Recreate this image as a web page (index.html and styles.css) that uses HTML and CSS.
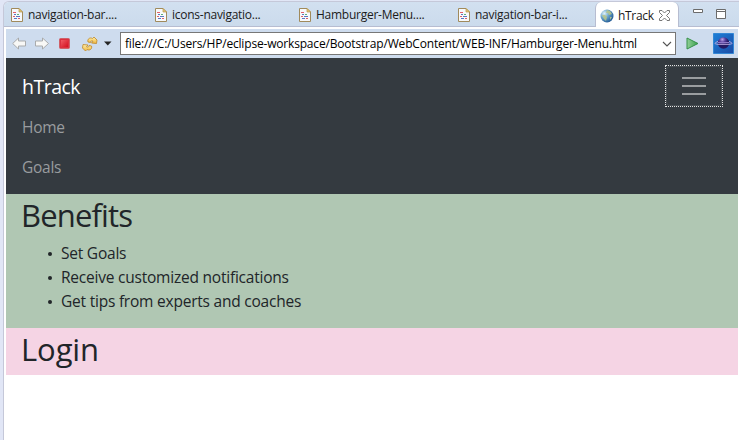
FILE: index.html
```html
<!DOCTYPE html>
<html lang="en">
<head>
<meta charset="utf-8">
<title>hTrack</title>
<link rel="stylesheet" href="styles.css">
</head>
<body>
<svg class="defs" width="0" height="0">
  <symbol id="file" viewBox="0 0 12 14">
    <path d="M.5 .5H8L11.500 4V13.500H.5Z" fill="#f7f9fb" stroke="#a08a5c"/>
    <path d="M8 .5V4H11.500Z" fill="#e3c877" stroke="#b8954a" stroke-width=".7"/>
    <path d="M2 4.500H5M2 8.500H4M7 10.500H9" stroke="#e0606c"/>
    <path d="M3 6.500H5M5 8.500H9M3 10.500H6" stroke="#5a78c0"/>
    <path d="M6 6.500H8" stroke="#5fb27b"/>
  </symbol>
</svg>
<div class="window">
  <header class="tabs">
    <div class="tab t1"><svg class="file"><use href="#file"/></svg><span class="label">navigation-bar....</span></div>
    <div class="tab t2"><svg class="file"><use href="#file"/></svg><span class="label">icons-navigatio...</span></div>
    <div class="tab t3"><svg class="file"><use href="#file"/></svg><span class="label">Hamburger-Menu....</span></div>
    <div class="tab t4"><svg class="file"><use href="#file"/></svg><span class="label">navigation-bar-i...</span></div>
    <div class="tab active">
      <svg class="globe" viewBox="0 0 14 14"><defs><radialGradient id="sea" cx=".3" cy=".3" r=".8"><stop offset="0" stop-color="#e0f2fa"/><stop offset=".45" stop-color="#6aa4cb"/><stop offset="1" stop-color="#1d5591"/></radialGradient></defs><circle cx="7" cy="7" r="6.500" fill="url(#sea)"/><path d="M7 1L10 2 12 5 9 6 8 4 6 4ZM2 6L5 6 7 8 6 12 4 10ZM10 8L12 8 10 11Z" fill="#b9c587" fill-opacity=".85"/></svg>
      <span class="label current">hTrack</span>
      <svg class="close" viewBox="0 0 11 11"><path d="M.5 .5H3L5.500 3 8 .5H10.500V2.500L7.500 5.500 10.500 8.500V10.500H8L5.500 8 3 10.500H.5V8.500L3.500 5.500 .5 2.500Z" fill="#fff" stroke="#767676"/></svg>
    </div>
    <svg class="controls" viewBox="0 0 34 12"><path d="M.5 1.500H9.500V4.500H.5Z" fill="#fff" stroke="#6b6b6b"/><path d="M23.500 1.500H32.500V10.500H23.500ZM23 3.500H33" fill="#fff" stroke="#6b6b6b"/></svg>
  </header>
  <div class="toolbar">
    <svg class="actions" viewBox="0 0 106 20">
      <defs>
        <linearGradient id="gold" x2="0" y2="1"><stop offset="0" stop-color="#fff0ab"/><stop offset="1" stop-color="#efb63f"/></linearGradient>
        <linearGradient id="red" x2="1" y2="1"><stop offset="0" stop-color="#f05a64"/><stop offset="1" stop-color="#d3101f"/></linearGradient>
      </defs>
      <path d="M.7 9.500L6.500 4V7H13.500V12H6.500V15Z" fill="#f8f8f6" stroke="#a9abac"/>
      <path d="M36.500 9.500L30.500 4V7H23.500V12H30.500V15Z" fill="#f8f8f6" stroke="#a9abac"/>
      <rect x="47.500" y="4.500" width="10" height="10" rx="1" fill="#dc3040" stroke="#cf6068"/><path d="M49 6H56V13H49Z" fill="url(#red)"/>
      <path d="M76 8C75 5 78 3 80.500 4.500L82 3 85 6 84.500 9.500 79.500 9 81 7.200C79.500 6.500 78.500 7 78.500 8.500Z" fill="url(#gold)" stroke="#bd8829" stroke-width=".8"/>
      <path d="M79.500 12C80.500 15 77.500 17 75 15.500L73.500 17 70.500 14 71 10.500 76 11 74.500 12.800C76 13.500 77 13 77 11.500Z" fill="url(#gold)" stroke="#bd8829" stroke-width=".8"/>
      <path d="M92 7.500H99.500L95.750 11.500Z" fill="#242424"/>
    </svg>
    <div class="address"><span>file:///C:/Users/HP/eclipse-workspace/Bootstrap/WebContent/WEB-INF/Hamburger-Menu.html</span><svg class="chevron" viewBox="0 0 10 6"><path d="M1 1L5 5 9 1" fill="none" stroke="#555" stroke-width="1.100"/></svg></div>
    <svg class="go" viewBox="0 0 13 13"><defs><linearGradient id="green"><stop offset="0" stop-color="#93cf98"/><stop offset="1" stop-color="#38a14c"/></linearGradient></defs><path d="M1 1L12 6.500 1 12Z" fill="url(#green)" stroke="#369149"/></svg>
    <svg class="eclipse" viewBox="0 0 21 21"><defs><linearGradient id="blue" x2="1" y2="1"><stop offset="0" stop-color="#1e80d8"/><stop offset="1" stop-color="#1a4ba5"/></linearGradient><radialGradient id="planet" cx=".4" cy=".2"><stop offset="0" stop-color="#b9a5e4"/><stop offset=".5" stop-color="#58409f"/><stop offset="1" stop-color="#231962"/></radialGradient></defs><path d="M.5 .5H20.500V20.500H.5Z" fill="url(#blue)" stroke="#3387d5"/><circle cx="10.500" cy="10" r="5.800" fill="url(#planet)"/><path d="M5 9.500H16" stroke="#8d78c8" stroke-width="1"/><path d="M5 8.500C1 10 1 11 5 11.300H16C20 11 20 10 16 8.500" fill="none" stroke="#b8a9e0"/></svg>
  </div>
  <main class="page">
    <nav class="navbar">
      <div class="navtop"><a class="brand">hTrack</a><div class="focus"><button class="toggler" aria-label="Toggle navigation"><svg viewBox="0 0 30 30"><path d="M3 7H27M3 15H27M3 23H27" stroke="#9a9da0" stroke-width="2"/></svg></button></div></div>
      <a class="link">Home</a>
      <a class="link">Goals</a>
    </nav>
    <section class="benefits"><h1 class="wide">Benefits</h1><ul><li>Set Goals</li><li>Receive customized notifications</li><li>Get tips from experts and coaches</li></ul></section>
    <section class="login"><h1>Login</h1></section>
  </main>
</div>
</body>
</html>
```

FILE: styles.css
```css
* { box-sizing: border-box; }
body { margin: 0; height: 440px; overflow: hidden; background: #e1e6f6; font-family: "Open Sans", "Noto Sans", sans-serif; }
svg { display: block; flex: none; }
.defs { position: absolute; }
.window { margin: 1px 0 0 3px; height: 439px; border: 1px solid #c5c8d9; border-right: 0; border-bottom: 0; border-radius: 6px 0 0 0; background: #fff; overflow: hidden; }
.tabs { height: 25px; display: flex; background: linear-gradient(#d2e0f0, #cbdbec); border-bottom: 1px solid #b7bdd1; font-size: 12px; color: #1b1b1b; white-space: nowrap; }
.tab { display: flex; height: 24px; align-items: center; gap: 5px; padding-left: 7px; }
.label { line-height: 24px; padding-top: 2px; letter-spacing: -.26px; }
.current { letter-spacing: -.3px; }
.file { width: 12px; height: 14px; margin-top: 2px; }
.t1, .t2 { width: 144px; }
.t3 { width: 159px; }
.t4 { width: 144px; }
.active { height: 25px; width: 84px; padding-left: 4px; gap: 4px; background: #fff; border: 1px solid #b7bdd1; border-width: 0 1px; border-radius: 6px 6px 0 0; }
.globe { width: 14px; height: 14px; margin-top: 2px; }
.close { width: 11px; height: 11px; margin: 2px 0 0 1px; }
.controls { width: 34px; height: 12px; margin: 6px 0 0 14px; }
.toolbar { height: 29px; margin: 2px 1px 0 2px; display: flex; align-items: center; background: #cedcee; }
.actions { width: 106px; height: 20px; margin-left: 6px; margin-right: 2px; }
.address { width: 556px; height: 23px; border: 1px solid #777; background: #fff; display: flex; align-items: center; justify-content: space-between; padding: 0 3px 0 4px; font-size: 12px; letter-spacing: -.18px; white-space: nowrap; }
.chevron { width: 10px; height: 6px; }
.go { width: 13px; height: 13px; margin-left: 10px; }
.eclipse { width: 21px; height: 21px; margin-left: 14px; }
.page { margin: 0 1px 0 2px; color: #212529; font-size: 16px; line-height: 24px; }
.navbar { height: 136px; padding: 8px 15px 8px 16px; background: #343a40; }
.navtop { height: 40px; display: flex; justify-content: space-between; align-items: center; }
.brand { color: #fff; font-size: 19.5px; letter-spacing: -.5px; padding-top: 2px; }
.focus { width: 58px; height: 42px; border: 1px dotted #e4e4e4; }
.toggler { width: 56px; height: 40px; padding: 0 12px; border: 1px solid #484e53; border-radius: 4px; background: none; }
.toggler svg { width: 30px; height: 30px; }
.link { display: block; height: 40px; padding: 9px 0 7px; color: #999c9f; font-size: 15.5px; letter-spacing: -.25px; }
.benefits { height: 134px; padding: 0 15px; background: #b0c7b3; }
.login { height: 47px; padding: 0 15px; background: #f5d4e4; }
h1 { margin: 0; padding-top: 2px; height: 47px; font-size: 31px; line-height: 38px; font-weight: 400; letter-spacing: -.1px; }
.wide { letter-spacing: -.85px; }
ul { list-style: none; margin: 0; padding-left: 40px; font-size: 15.5px; letter-spacing: -.22px; }
li { position: relative; height: 24px; }
li::before { content: ""; position: absolute; left: -13px; top: 11px; width: 4px; height: 4px; border-radius: 50%; background: #212529; }
```
